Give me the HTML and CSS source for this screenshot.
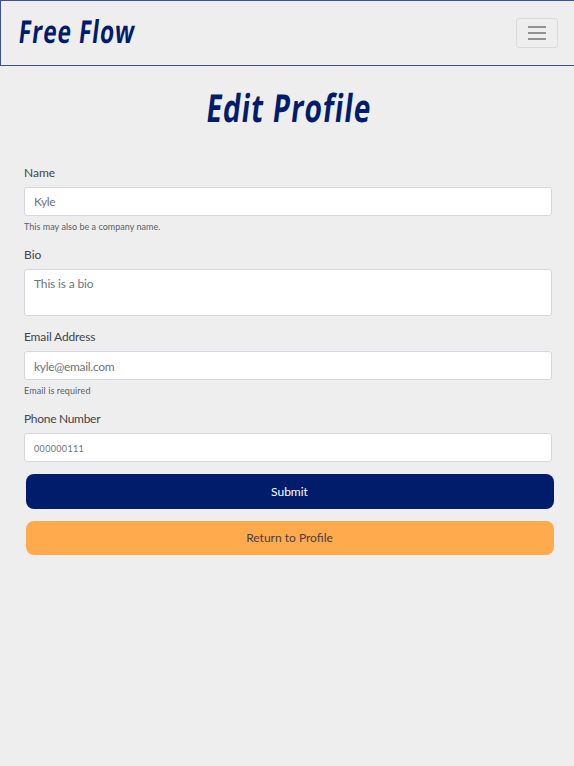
FILE: index.html
```html
<!DOCTYPE html>
<html lang="en">
<head>
<meta charset="utf-8">
<title>Free Flow</title>
<link rel="stylesheet" href="styles.css">
</head>
<body>
<nav class="navbar">
  <a class="brand">Free Flow</a>
  <button class="toggler" aria-label="Menu">
    <svg width="20" height="16" viewBox="0 0 20 16"><path d="M1 2h18M1 8h18M1 14h18" stroke="#929292" stroke-width="2"/></svg>
  </button>
</nav>
<h1 class="title"><span class="title-text">Edit Profile</span></h1>
<form class="form">
  <div class="group">
    <label class="label" for="name">Name</label>
    <input class="control name" id="name" placeholder="Kyle">
    <small class="hint name-hint">This may also be a company name.</small>
  </div>
  <div class="group">
    <label class="label" for="bio">Bio</label>
    <textarea class="control bio" id="bio" placeholder="This is a bio"></textarea>
  </div>
  <div class="group">
    <label class="label email-label" for="email">Email Address</label>
    <input class="control email" id="email" placeholder="kyle@email.com">
    <small class="hint email-hint">Email is required</small>
  </div>
  <div class="group phone-group">
    <label class="label phone-label" for="phone">Phone Number</label>
    <input class="control phone" id="phone" placeholder="000000111">
  </div>
  <button class="button submit" type="button">Submit</button>
  <button class="button return" type="button">Return to Profile</button>
</form>
</body>
</html>
```
FILE: styles.css
```css
* { box-sizing: border-box; }
body {
  margin: 0;
  min-height: 766px;
  background: #eee;
  color: #3f444c;
  font-family: Lato, "Liberation Sans", sans-serif;
  font-size: 12px;
}
.navbar {
  display: flex;
  justify-content: space-between;
  align-items: center;
  height: 66px;
  padding: 0 16px 0 18px;
  border: 1px solid #3f528f;
  border-right: 0;
}
.brand, .title-text {
  display: inline-block;
  color: #001c6b;
  font-family: "Open Sans", sans-serif;
  font-weight: 700;
  white-space: nowrap;
}
.brand {
  font-size: 31.5px;
  line-height: 40px;
  letter-spacing: 1.3px;
  transform: skewX(-7deg) scaleX(.72);
  transform-origin: left;
  margin-top: -4px;
}
.toggler {
  display: flex;
  align-items: center;
  justify-content: center;
  width: 42px;
  height: 30px;
  padding: 0;
  border: 1px solid #dadada;
  border-radius: 3px;
  background: transparent;
}
.title {
  display: flex;
  justify-content: center;
  height: 97px;
  margin: 0;
  padding: 16px 0 0 4px;
}
.title-text {
  font-size: 38.5px;
  line-height: 50px;
  height: 50px;
  letter-spacing: 1.3px;
  transform: skewX(-7deg) scaleX(.727);
}
.form { padding: 0 20px 0 24px; }
.group {
  display: flex;
  flex-direction: column;
  width: 528px;
  height: 82px;
}
.phone-group { margin-bottom: -17px; }
.label {
  height: 24.3px;
  line-height: 20px;
  align-self: flex-start;
}
.email-label { letter-spacing: -.15px; }
.phone-label { letter-spacing: -.3px; }
.control {
  display: block;
  flex: none;
  width: 100%;
  height: 29px;
  margin: 0;
  padding: 0 9px;
  border: 1px solid #d5d9dd;
  border-radius: 3px;
  background: #fff;
  color: #6c757d;
  font: 12px Lato, sans-serif;
}
.control::placeholder { color: #6c757d; opacity: 1; }
.name { letter-spacing: -.4px; }
.bio { height: 47px; padding-top: 6px; resize: none; letter-spacing: -.15px; }
.email { padding-top: 2px; letter-spacing: -.3px; }
.phone { padding-top: 2px; font-size: 9px; letter-spacing: .35px; }
.hint {
  margin-top: 4px;
  font-size: 9px;
  line-height: 14px;
  align-self: flex-start;
  color: #5a5f67;
}
.name-hint { letter-spacing: .03px; }
.email-hint { letter-spacing: .1px; }
.button {
  display: block;
  width: 528px;
  height: 34.5px;
  margin: 0 0 12px 1.5px;
  padding: 0;
  border: 0;
  border-radius: 8px;
  font: 12px Lato, sans-serif;
}
.submit { background: #001c6b; color: #fff; }
.return { background: #ffaa4d; color: #3f3f4a; }
```
